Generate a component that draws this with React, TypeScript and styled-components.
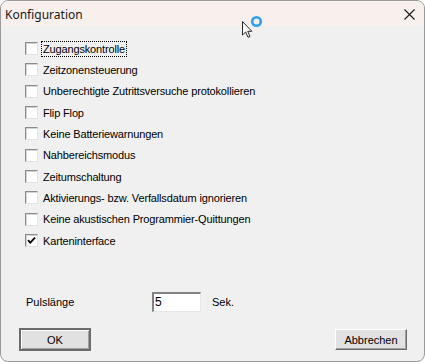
import styled, { createGlobalStyle } from 'styled-components';

const Global = createGlobalStyle`
  html, body {
    margin: 0;
    padding: 0;
    background: #ffffff;
  }
  body {
    font-family: 'Liberation Sans', Arial, sans-serif;
  }
`;

const options = [
  { label: 'Zugangskontrolle', checked: false, focused: true },
  { label: 'Zeitzonensteuerung', checked: false },
  { label: 'Unberechtigte Zutrittsversuche protokollieren', checked: false },
  { label: 'Flip Flop', checked: false },
  { label: 'Keine Batteriewarnungen', checked: false },
  { label: 'Nahbereichsmodus', checked: false },
  { label: 'Zeitumschaltung', checked: false },
  { label: 'Aktivierungs- bzw. Verfallsdatum ignorieren', checked: false },
  { label: 'Keine akustischen Programmier-Quittungen', checked: false },
  { label: 'Karteninterface', checked: true },
];

export default function App() {
  return (
    <>
      <Global />
      <Window>
        <TitleBar>
          <Title>Konfiguration</Title>
          <CloseButton aria-label="Schließen">
            <svg width="11" height="11" viewBox="0 0 11 11">
              <path d="M0.5 0.5 L10.5 10.5 M10.5 0.5 L0.5 10.5" stroke="#1a1a1a" strokeWidth="1.1" />
            </svg>
          </CloseButton>
        </TitleBar>
        <Body>
          <OptionList>
            {options.map((o) => (
              <OptionRow key={o.label}>
                <CheckBox>
                  {o.checked && (
                    <svg width="9" height="9" viewBox="0 0 9 9">
                      <path d="M1 4.2 L3.3 6.6 L8 1.6" stroke="#000" strokeWidth="1.8" fill="none" />
                    </svg>
                  )}
                </CheckBox>
                <OptionLabel $focused={o.focused}>{o.label}</OptionLabel>
              </OptionRow>
            ))}
          </OptionList>
          <PulseRow>
            <PulseLabel>Pulslänge</PulseLabel>
            <NumberBox>5</NumberBox>
            <Unit>Sek.</Unit>
          </PulseRow>
          <ButtonRow>
            <DefaultButton>OK</DefaultButton>
            <Button>Abbrechen</Button>
          </ButtonRow>
        </Body>
        <Cursor width="26" height="26" viewBox="0 0 26 26">
          <path
            d="M2.5 6.5 L2.5 20 L5.6 17 L8 22.3 L10 21.4 L7.7 16.3 L11.8 16.3 Z"
            fill="#fff"
            stroke="#111"
            strokeWidth="0.9"
            strokeLinejoin="round"
          />
          <circle cx="16.5" cy="6.5" r="4.3" fill="none" stroke="#2f9ef4" strokeWidth="2.6" />
        </Cursor>
      </Window>
    </>
  );
}

const Window = styled.div`
  position: relative;
  width: 425px;
  height: 362px;
  box-sizing: border-box;
  border: 1px solid #9b9b9b;
  border-radius: 8px;
  overflow: hidden;
  background: #f0f0f0;
  display: flex;
  flex-direction: column;
  color: #000;
`;

const TitleBar = styled.div`
  height: 25px;
  flex-shrink: 0;
  background: #f8f0ed;
  display: flex;
  align-items: center;
  justify-content: space-between;
  padding: 0 9px 0 4px;
`;

const Title = styled.span`
  font-family: 'Noto Sans', 'Open Sans', sans-serif;
  font-size: 12px;
  color: #1a1a1a;
  margin-top: 1px;
`;

const CloseButton = styled.div`
  width: 12px;
  height: 12px;
  display: flex;
  align-items: center;
  justify-content: center;
  margin-top: 2px;
`;

const Body = styled.div`
  flex: 1;
  display: flex;
  flex-direction: column;
  padding: 12px 16px 0 17px;
  font-size: 11px;
`;

const OptionList = styled.div`
  display: flex;
  flex-direction: column;
  padding-left: 7px;
`;

const OptionRow = styled.div`
  height: 21.33px;
  display: flex;
  align-items: center;
  gap: 4px;
`;

const CheckBox = styled.div`
  width: 13px;
  height: 13px;
  box-sizing: border-box;
  background: #fff;
  border-top: 1px solid #8c8c8c;
  border-left: 1px solid #8c8c8c;
  border-right: 1px solid #e3e3e3;
  border-bottom: 1px solid #e3e3e3;
  box-shadow: inset 1px 1px 0 #d4d4d4;
  display: flex;
  align-items: center;
  justify-content: center;
`;

const OptionLabel = styled.span<{ $focused?: boolean }>`
  padding: 1px 1px;
  outline: ${(p) => (p.$focused ? '1px dotted #000' : 'none')};
  outline-offset: 0;
  white-space: nowrap;
  letter-spacing: -0.15px;
`;

const PulseRow = styled.div`
  display: flex;
  align-items: center;
  margin-top: 40px;
  padding-left: 8px;
  height: 21px;
`;

const PulseLabel = styled.span`
  width: 126px;
`;

const NumberBox = styled.div`
  width: 49px;
  height: 20px;
  box-sizing: border-box;
  background: #fff;
  border-top: 2px solid #828282;
  border-left: 2px solid #828282;
  border-right: 1px solid #e6e6e6;
  border-bottom: 1px solid #e6e6e6;
  padding: 1px 0 0 1px;
  font-size: 12px;
`;

const Unit = styled.span`
  margin-left: 11px;
`;

const ButtonRow = styled.div`
  display: flex;
  justify-content: space-between;
  margin-top: 16px;
  padding-left: 0;
  padding-right: 1px;
`;

const Button = styled.div`
  width: 72px;
  height: 21px;
  box-sizing: border-box;
  background: #e1e1e1;
  border-top: 1px solid #fff;
  border-left: 1px solid #fff;
  border-right: 1px solid #696969;
  border-bottom: 1px solid #696969;
  box-shadow: inset -1px -1px 0 #a0a0a0;
  display: flex;
  align-items: center;
  justify-content: center;
  font-size: 11px;
  margin-top: 1px;
`;

const DefaultButton = styled(Button)`
  width: 72px;
  height: 23px;
  border: 2px solid #6b6b6b;
  box-shadow: inset 1px 1px 0 #fff, inset -1px -1px 0 #a0a0a0;
  margin-left: 1px;
  margin-top: 0;
`;

const Cursor = styled.svg`
  position: absolute;
  left: 239px;
  top: 14px;
  pointer-events: none;
`;
